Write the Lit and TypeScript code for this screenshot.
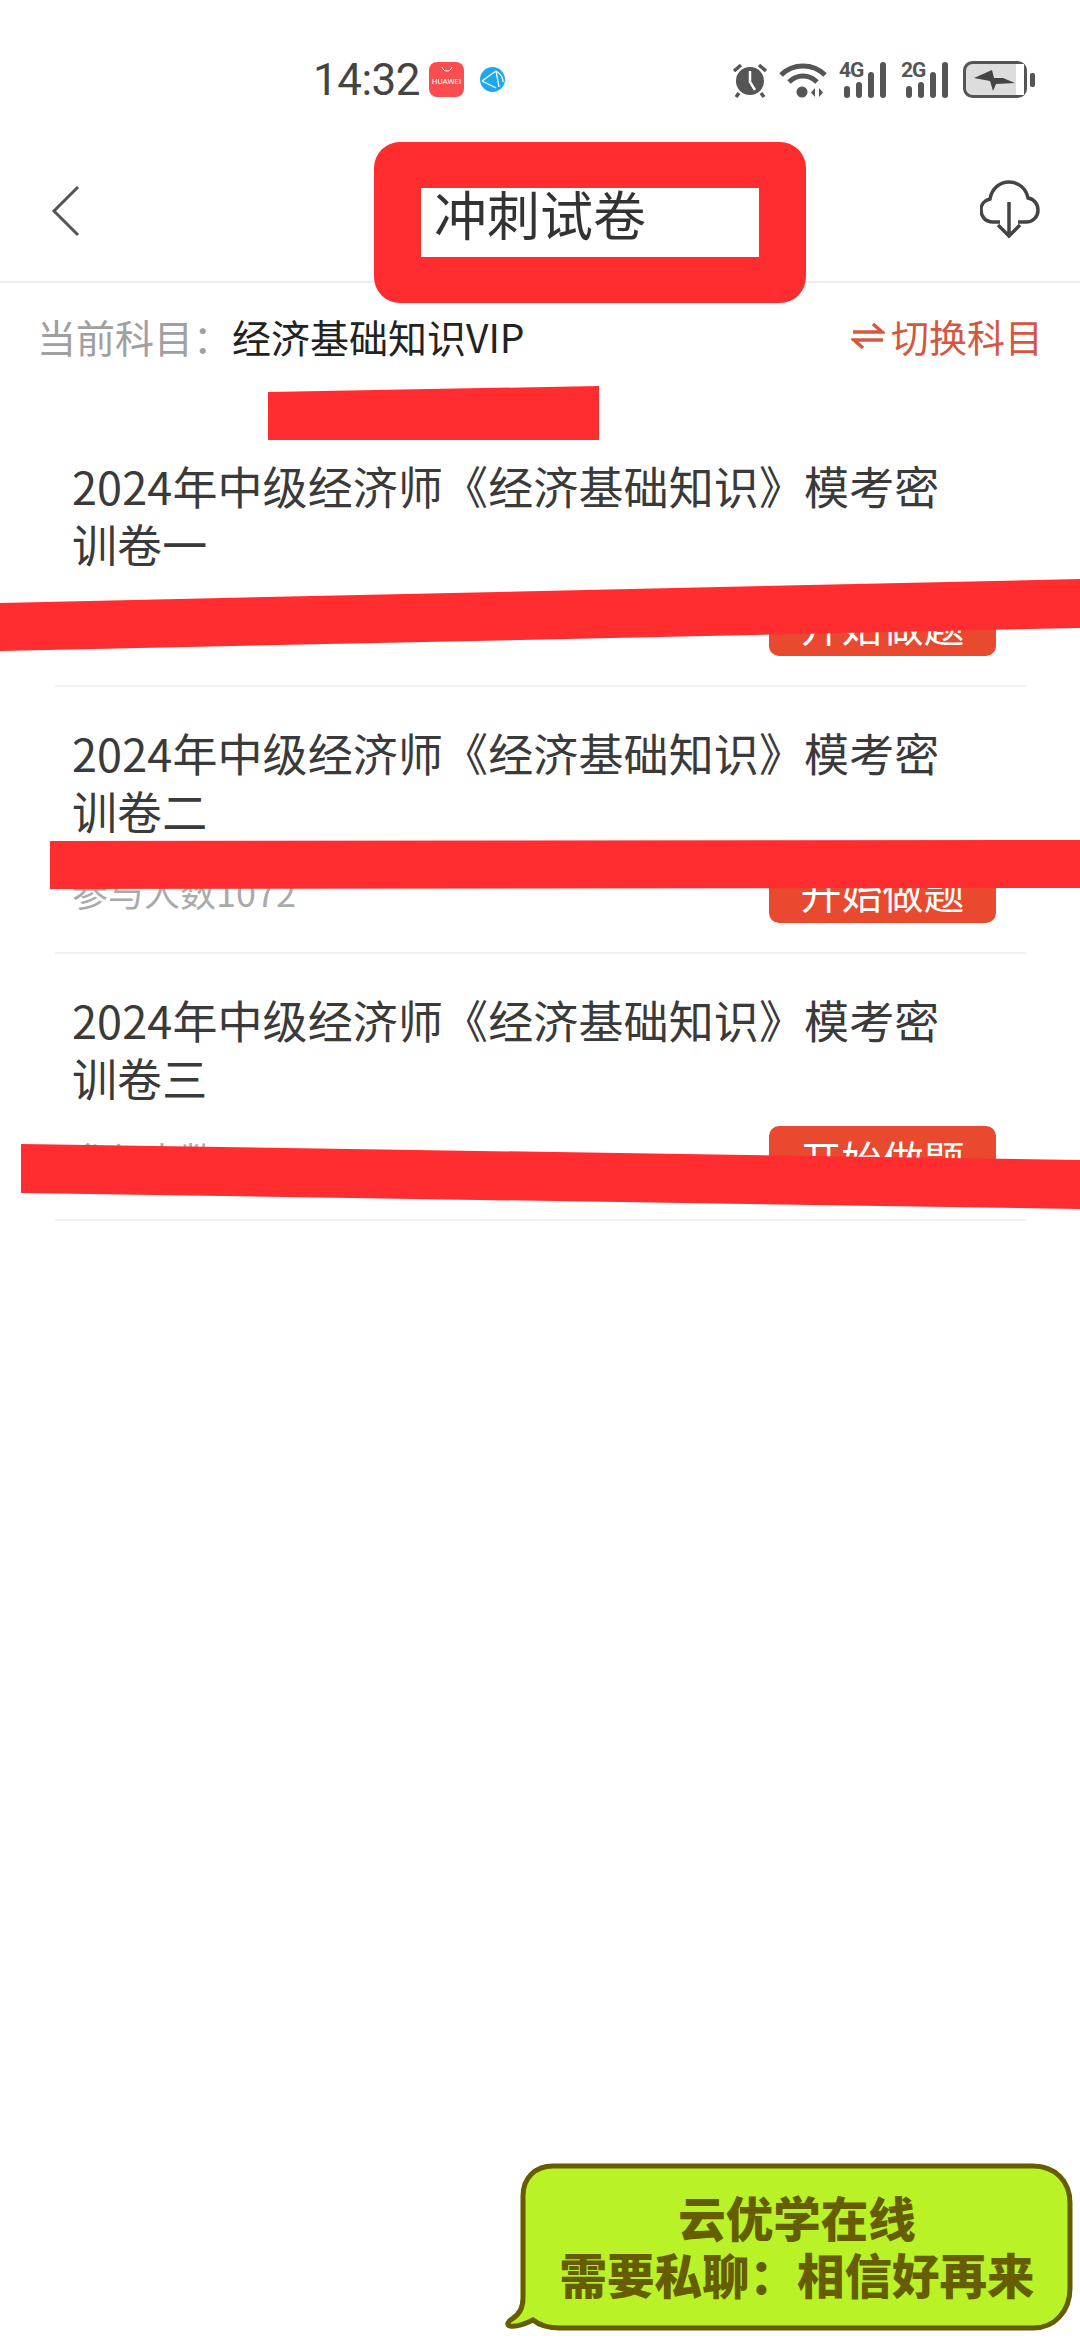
import { LitElement, html, css, svg, unsafeCSS } from 'lit';
import { customElement } from 'lit/decorators.js';

const FONT = unsafeCSS(`"Noto Sans CJK SC", "Noto Sans", sans-serif`);

interface Paper {
    title: string;
    // hidden behind the scribble in the screenshot when empty
    count: string;
}

const PAPERS: Paper[] = [
    { title: '2024年中级经济师《经济基础知识》模考密训卷一', count: '' },
    { title: '2024年中级经济师《经济基础知识》模考密训卷二', count: '参与人数1072' },
    { title: '2024年中级经济师《经济基础知识》模考密训卷三', count: '参与人数1090' },
];

// red scribbles painted over the screenshot
const SCRIBBLES = [
    '268,392 599,386 599,440 268,440',
    '0,603 1080,579 1080,628 0,651',
    '50,841 1080,840 1080,888 50,889',
    '21,1144 1080,1160 1080,1209 21,1193',
];

@customElement('app-root')
export class AppRoot extends LitElement {
    static styles = css`
        :host {
            display: block;
            position: relative;
            width: 1080px;
            height: 2339px;
            overflow: hidden;
            background: #fff;
            font-family: ${FONT};
            color: #333;
        }

        /* status bar */
        .status {
            height: 130px;
            box-sizing: border-box;
            padding: 62px 43px 0 313px;
            display: flex;
            align-items: flex-start;
            color: #555;
        }
        .time {
            font-family: Roboto, sans-serif;
            font-size: 44px;
            color: #444;
            line-height: 36px;
            letter-spacing: -0.5px;
            width: 116px;
        }
        .app-badge {
            width: 35px;
            height: 35px;
            border-radius: 8px;
            background: #fa4d50;
            color: #fff;
            font-family: Roboto, sans-serif;
            font-size: 8px;
            line-height: 9px;
            text-align: center;
            box-sizing: border-box;
            padding-top: 4px;
        }
        .app-badge svg { display: block; margin: 0 auto 4px; }
        .globe { margin: 5px 0 0 16px; }
        .status-right {
            margin-left: auto;
            display: flex;
            align-items: flex-start;
        }
        .net {
            position: relative;
            width: 50px;
            height: 36px;
            margin-left: 12px;
        }
        .net b {
            position: absolute;
            left: 0;
            top: -2px;
            font-family: Roboto, sans-serif;
            font-size: 21px;
            line-height: 21px;
            font-weight: 700;
            letter-spacing: -1px;
        }
        .net svg { position: absolute; left: 0; top: 0; }

        /* title bar */
        .bar {
            height: 153px;
            box-sizing: border-box;
            border-bottom: 2px solid #eee;
            display: flex;
            align-items: flex-start;
            justify-content: space-between;
            padding: 55px 40px 0 50px;
        }
        .bar .cloud { margin-top: -5px; }
        .title-mark {
            position: absolute;
            left: 374px;
            top: 142px;
            width: 432px;
            height: 161px;
            box-sizing: border-box;
            padding: 46px 47px;
            border-radius: 26px;
            background: #ff2d2f;
        }
        .title-window {
            height: 69px;
            background: #fff;
            padding-left: 13px;
            font-size: 53px;
            line-height: 50px;
            color: #333;
        }

        /* subject row */
        .subject {
            height: 106px;
            box-sizing: border-box;
            padding: 29px 37px 0 37px;
            display: flex;
            align-items: flex-start;
            font-size: 39px;
            line-height: 48px;
        }
        .subject .label { color: #a0a0a0; width: 195px; }
        .subject .name { color: #222; }
        .switch {
            margin-left: auto;
            display: flex;
            align-items: center;
            color: #d5573f;
            gap: 6px;
            font-size: 38px;
        }

        /* paper list */
        .list { margin: 0 54px 0 55px; padding-top: 31px; }
        .item {
            border-bottom: 2px solid #f1f1f1;
            padding: 37px 30px 29px 17px;
        }
        .name-line {
            font-size: 45px;
            letter-spacing: 0.12px;
            line-height: 58px;
            color: #3a3a3a;
            margin: 0 20px 19px 0;
        }
        .meta {
            display: flex;
            align-items: center;
            justify-content: space-between;
        }
        .count { font-size: 36px; color: #aaa; }
        .start {
            width: 227px;
            height: 64px;
            border-radius: 10px;
            background: #e8492f;
            color: #fff;
            font-size: 41px;
            line-height: 64px;
            text-align: center;
        }

        .scribbles {
            position: absolute;
            left: 0;
            top: 0;
            pointer-events: none;
        }

        /* floating ad bubble */
        .bubble {
            position: absolute;
            left: 505px;
            top: 2163px;
            width: 570px;
            height: 170px;
        }
        .bubble svg { position: absolute; left: 0; top: 0; }
        .bubble-text {
            position: absolute;
            left: 18px;
            right: 4px;
            top: 25px;
            text-align: center;
            font-size: 47.5px;
            line-height: 57px;
            font-weight: 900;
            color: #665c00;
        }
    `;

    private statusIcons() {
        return html`
            <div class="status-right">
                <svg width="38" height="36" viewBox="0 0 38 36">
                    <circle cx="19" cy="19" r="14" fill="#555" />
                    <path d="M19 9v11l5 8" stroke="#fff" stroke-width="2.5" fill="none" />
                    <path d="M3 9l7-6M35 9l-7-6M8 31l-3 4M30 31l3 4" stroke="#555" stroke-width="3.5" fill="none" />
                </svg>
                <svg width="48" height="36" viewBox="0 0 48 36" style="margin-left:10px">
                    <path d="M2 13C14 1 34 1 46 13" stroke="#555" stroke-width="5" fill="none" />
                    <path d="M10 20C18 12 30 12 38 20" stroke="#555" stroke-width="5" fill="none" />
                    <circle cx="23" cy="30" r="5.5" fill="#555" />
                    <path d="M36 26v9l-4-4.500zM40 26v9l4-4.500z" fill="#555" />
                </svg>
                <div class="net">
                    <b>4G</b>
                    ${this.signal()}
                </div>
                <div class="net">
                    <b>2G</b>
                    ${this.signal()}
                </div>
                <svg width="74" height="38" viewBox="0 0 74 38" style="margin:-1px 0 0 12px">
                    <rect x="1.500" y="1.500" width="61" height="34" rx="8" fill="#ddd" stroke="#555" stroke-width="3" />
                    <rect x="53" y="3" width="8" height="31" fill="#fff" />
                    <path d="M11 17L29 9l2 8h9l12 5-19 1-3 7-3-10z" fill="#444" />
                    <rect x="67" y="12" width="5" height="14" rx="2" fill="#555" />
                </svg>
            </div>
        `;
    }

    private signal() {
        const bars = [
            [8, 24, 12],
            [20, 20, 16],
            [32, 10, 26],
            [44, 0, 36],
        ];
        return html`<svg width="50" height="36" viewBox="0 0 50 36">
            ${bars.map(([x, y, h]) => svg`<rect x=${x - 3} y=${y} width="6" height=${h} rx="3" fill="#555" />`)}
        </svg>`;
    }

    render() {
        return html`
            <div class="status">
                <div class="time">14:32</div>
                <div class="app-badge">
                    <svg width="12" height="7" viewBox="0 0 12 7">
                        <path d="M1 1c1 3 3 4 5 4s4-1 5-4" stroke="#fff" stroke-width="1" fill="none" />
                    </svg>
                    HUAWEI
                </div>
                <svg class="globe" width="25" height="25" viewBox="0 0 25 25">
                    <circle cx="12.500" cy="12.500" r="12.500" fill="#1da7ee" />
                    <path d="M2 14L16 4M2 14l14 7M16 4l3 16M16 4c5 3 7 7 7 11" stroke="#fff" stroke-width="1.300" fill="none" />
                </svg>
                ${this.statusIcons()}
            </div>

            <div class="bar">
                <svg width="32" height="52" viewBox="0 0 32 52">
                    <path d="M28 2L4 26l24 24" stroke="#555" stroke-width="3" fill="none" />
                </svg>
                <svg class="cloud" width="60" height="60" viewBox="0 0 60 60">
                    <path d="M20 42H13C5 42 1 36 1 30c0-6 4-10 9-11C12 8 20 2 29 2s17 6 19 16c6 1 10 6 10 12 0 7-5 12-12 12h-8" stroke="#444" stroke-width="3.500" fill="none" />
                    <path d="M29 22v34M18 45l11 11 11-11" stroke="#444" stroke-width="3.500" fill="none" />
                </svg>
            </div>

            <div class="title-mark">
                <div class="title-window">冲刺试卷</div>
            </div>

            <div class="subject">
                <span class="label">当前科目：</span>
                <span class="name">经济基础知识VIP</span>
                <span class="switch">
                    <svg width="34" height="30" viewBox="0 0 34 30">
                        <path d="M2 11h29L22 3M32 19H3l9 8" stroke="#d5573f" stroke-width="3.500" fill="none" />
                    </svg>
                    切换科目
                </span>
            </div>

            <div class="list">
                ${PAPERS.map(
                    (p) => html`
                        <div class="item">
                            <div class="name-line">${p.title}</div>
                            <div class="meta">
                                <span class="count">${p.count}</span>
                                <div class="start">开始做题</div>
                            </div>
                        </div>
                    `,
                )}
            </div>

            <svg class="scribbles" width="1080" height="1300" viewBox="0 0 1080 1300">
                ${SCRIBBLES.map((pts) => svg`<polygon points=${pts} fill="#ff2d2f" />`)}
            </svg>

            <div class="bubble">
                <svg width="570" height="170" viewBox="0 0 570 170">
                    <path
                        d="M48 3H528C550 3 565 18 565 40V125C565 148 550 165 528 165H55C42 165 34 162 28 157C20 161 10 164 5 163C1 162 3 158 7 156C12 153 18 148 18 135V33C18 15 30 3 48 3Z"
                        fill="#b9f227"
                        stroke="#665c00"
                        stroke-width="5"
                    />
                </svg>
                <div class="bubble-text">云优学在线<br />需要私聊：相信好再来</div>
            </div>
        `;
    }
}
